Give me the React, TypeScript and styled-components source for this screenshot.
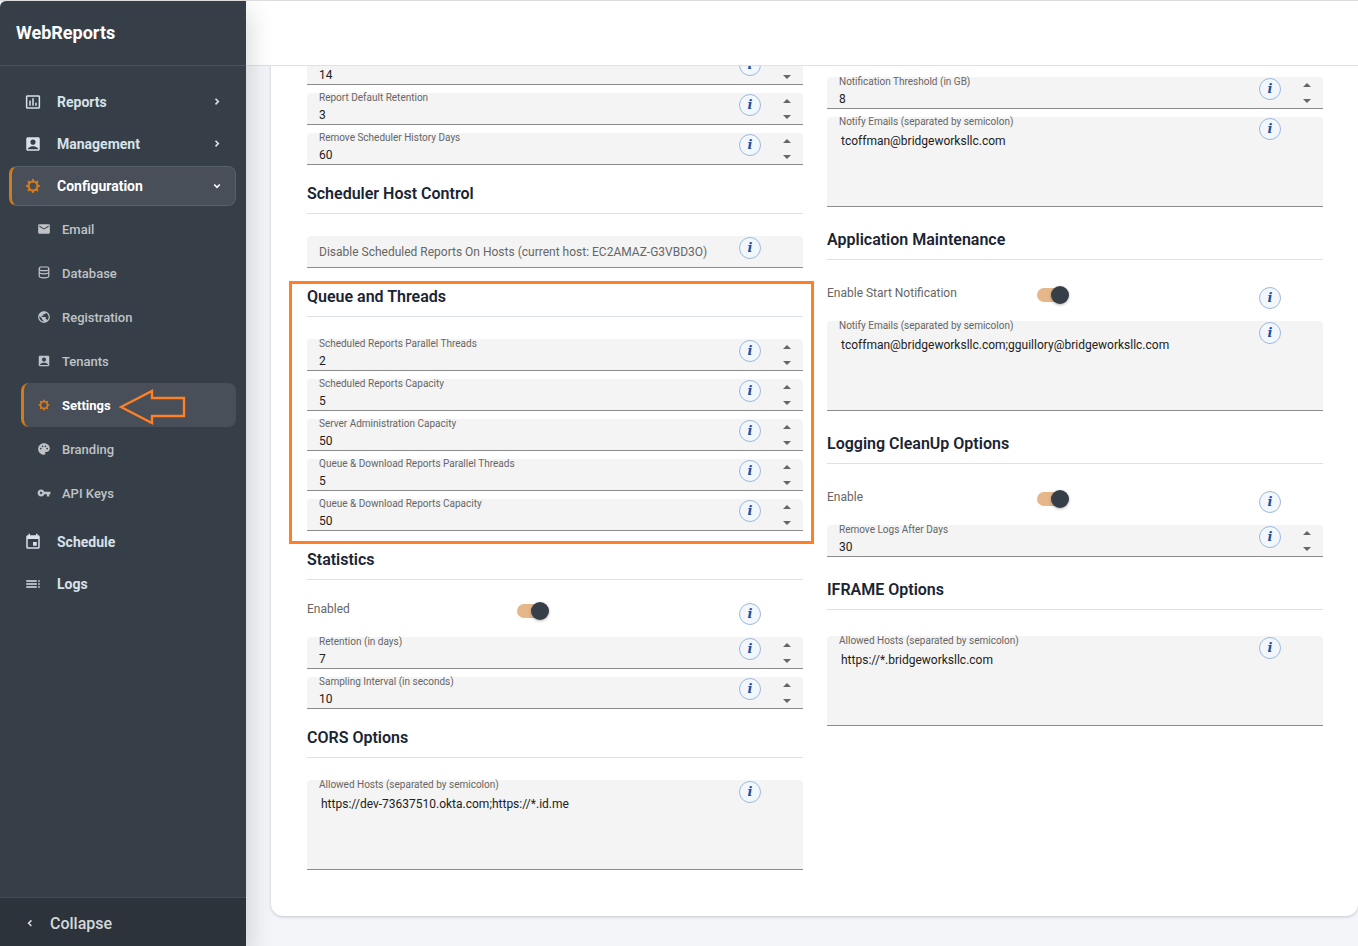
import React, { useId } from "react";
import styled, { createGlobalStyle, css } from "styled-components";
import {
  MdAccountBox,
  MdEmail,
  MdEvent,
  MdInsertChartOutlined,
  MdPalette,
  MdPublic,
  MdToc,
  MdVpnKey,
} from "react-icons/md";

const GlobalStyle = createGlobalStyle`
  *, *::before, *::after { box-sizing: border-box; }
  body {
    margin: 0;
    background: #f4f5f8;
    font-family: Roboto, "Liberation Sans", sans-serif;
    font-size: 12px;
    color: #212121;
  }
  button, input, textarea { font: inherit; color: inherit; }
`;

/* ---------- shell ---------- */

const Shell = styled.div`
  display: flex;
  height: 100vh;
  border-top: 1px solid #dcdcdc;
  overflow: hidden;
`;

const Sidebar = styled.aside`
  flex: 0 0 246px;
  display: flex;
  flex-direction: column;
  background: #363f48;
  border-top-left-radius: 6px;
  box-shadow: 4px 10px 24px rgba(54, 63, 72, 0.2);
  z-index: 1;
`;

const Brand = styled.div`
  height: 65px;
  padding: 0 16px;
  border-bottom: 1px solid #4b545e;
  font-size: 18px;
  font-weight: 700;
  line-height: 64px;
  color: #ffffff;
`;

const Nav = styled.nav`
  flex: 1;
  display: flex;
  flex-direction: column;
  gap: 2px;
  padding: 16px 10px 0 9px;
`;

const NavItem = styled.a<{ $active?: boolean }>`
  display: flex;
  align-items: center;
  height: 40px;
  padding: 0 12px;
  border: 1px solid transparent;
  border-left: 3px solid transparent;
  border-radius: 8px;
  color: #d8e1ea;
  font-size: 14px;
  font-weight: 700;
  text-decoration: none;
  ${(p) =>
    p.$active &&
    css`
      background: #484f58;
      border-color: #56606a;
      border-left-color: #d27a1e;
      color: #ffffff;
    `}
`;

const NavIcon = styled.span<{ $accent?: boolean }>`
  display: flex;
  width: 18px;
  margin-right: 15px;
  color: ${(p) => (p.$accent ? "#d27a1e" : "inherit")};
`;

const NavLabel = styled.span`
  flex: 1;
`;

const SubNav = styled.div`
  display: flex;
  flex-direction: column;
  margin-top: -1px;
  padding: 0 0 5px 12px;
`;

const SubItem = styled.a<{ $active?: boolean }>`
  position: relative;
  display: flex;
  align-items: center;
  height: 44px;
  padding-left: 13px;
  border-left: 3px solid transparent;
  border-radius: 8px;
  color: #bfc3c7;
  font-size: 13px;
  font-weight: 500;
  text-decoration: none;
  ${(p) =>
    p.$active &&
    css`
      background: #484f58;
      border-left-color: #d27a1e;
      color: #ffffff;
      font-weight: 700;
    `}
`;

const SubIcon = styled.span<{ $accent?: boolean }>`
  display: flex;
  width: 14px;
  margin-right: 11px;
  color: ${(p) => (p.$accent ? "#d27a1e" : "inherit")};
`;

const ArrowMark = styled.svg`
  position: absolute;
  left: 95px;
  top: 5px;
  width: 68px;
  height: 38px;
`;

const Collapse = styled.button`
  display: flex;
  align-items: center;
  gap: 14px;
  height: 49px;
  padding: 2px 24px 0;
  border: 0;
  border-top: 1px solid #434b54;
  background: #2d333b;
  color: #d5d8db;
  font-size: 16px;
  font-weight: 500;
`;

const Main = styled.main`
  flex: 1;
  min-width: 0;
  display: flex;
  flex-direction: column;
`;

const TopBar = styled.header`
  flex: 0 0 65px;
  background: #ffffff;
  border-bottom: 1px solid #dde1ea;
`;

/* The settings page is shown scrolled to its end. */
const Scroller = styled.div`
  flex: 1;
  min-height: 0;
  display: flex;
  flex-direction: column;
  justify-content: flex-end;
  overflow: hidden;
  padding: 0 0 30px 25px;
`;

const Card = styled.form`
  position: relative;
  z-index: 2;
  flex: none;
  display: grid;
  grid-template-columns: 1fr 1fr;
  column-gap: 24px;
  padding: 0 35px 46px 36px;
  background: #ffffff;
  border-radius: 12px;
  box-shadow: 0 1px 3px rgba(90, 110, 140, 0.35);
`;

const Column = styled.div<{ $roomy?: boolean }>`
  --heading: ${(p) => (p.$roomy ? "52px" : "48px")};
  --after: ${(p) => (p.$roomy ? "26px" : "22px")};
  padding-top: ${(p) => (p.$roomy ? "24px" : "0")};
  min-width: 0;
`;

/* ---------- sections and fields ---------- */

const Section = styled.section<{ $marked?: boolean }>`
  position: relative;
  ${(p) =>
    p.$marked &&
    css`
      &::after {
        content: "";
        position: absolute;
        inset: 13px -11px -13px -18px;
        border: 3px solid #ff7f27;
        pointer-events: none;
      }
    `}
`;

const Heading = styled.h2`
  display: flex;
  align-items: flex-end;
  height: calc(var(--heading) + 1px);
  margin: 0 0 var(--after);
  padding-bottom: 9px;
  border-bottom: 1px solid #dde1ea;
  font-size: 16px;
  font-weight: 600;
  line-height: 20px;
  color: #1a2433;
`;

const Fields = styled.div`
  display: flex;
  flex-direction: column;
  gap: 8px;
`;

const FieldBox = styled.div<{ $tall?: boolean }>`
  display: flex;
  align-items: flex-start;
  height: ${(p) => (p.$tall ? "90px" : "32px")};
  padding-left: 12px;
  background: #f4f4f4;
  border-bottom: 1px solid #8c8c8c;
  border-radius: 4px 4px 0 0;
`;

const FieldBody = styled.div`
  flex: 1;
  min-width: 0;
  display: flex;
  flex-direction: column;
`;

const FieldLabel = styled.label`
  min-height: 10px;
  font-size: 10px;
  line-height: 10px;
  color: #666666;
`;

const FieldInput = styled.input<{ $bare?: boolean }>`
  width: 100%;
  height: ${(p) => (p.$bare ? "31px" : "20px")};
  margin-top: ${(p) => (p.$bare ? "0" : "2px")};
  padding: 0;
  border: 0;
  outline: 0;
  background: transparent;
  appearance: textfield;
  &::-webkit-inner-spin-button { appearance: none; }
  &::placeholder { color: #666666; opacity: 1; }
`;

const FieldText = styled.textarea`
  width: 100%;
  height: 76px;
  margin-top: 2px;
  padding: 4px 2px;
  border: 0;
  outline: 0;
  resize: none;
  background: transparent;
  line-height: 16px;
`;

const InfoButton = styled.button`
  flex: none;
  width: 22px;
  height: 22px;
  margin: 1px 0 0;
  padding: 0;
  border: 1px solid #9db9dc;
  border-radius: 50%;
  background: #f2f7fd;
  color: #1f5199;
  font: italic 700 13px/18px "DejaVu Serif", "Liberation Serif", serif;
`;

const Steppers = styled.div`
  flex: 0 0 42px;
  display: flex;
  flex-direction: column;
  align-items: center;
  padding-left: 10px;
`;

const Step = styled.button`
  display: flex;
  align-items: center;
  justify-content: center;
  width: 16px;
  height: 16px;
  padding: 0;
  border: 0;
  background: transparent;
  color: #666666;
`;

const ToggleRow = styled.div`
  display: flex;
  align-items: flex-start;
  height: 35px;
`;

const ToggleLabel = styled.label`
  flex: 0 0 210px;
  line-height: 14px;
  color: #666666;
`;

const Toggle = styled.input`
  appearance: none;
  position: relative;
  width: 30px;
  height: 14px;
  margin: 2px auto 0 0;
  border-radius: 7px;
  background: #e5b78b;
  &::before {
    content: "";
    position: absolute;
    top: -2px;
    right: -2px;
    width: 18px;
    height: 18px;
    border-radius: 50%;
    background: #363f48;
    box-shadow: 0 1px 3px rgba(0, 0, 0, 0.3);
  }
`;

/* ---------- drawings ---------- */

const Chevron = ({ d }: { d: string }) => (
  <svg width="12" height="12" viewBox="0 0 12 12" fill="none" stroke="currentColor" strokeWidth="1.6">
    <path d={d} />
  </svg>
);

const RIGHT = "M4.5 2.8 L7.3 5.6 L4.5 8.4";
const DOWN = "M3.2 4.5 L6 7.3 L8.8 4.5";
const LEFT = "M7.4 3.4 L4.6 6.2 L7.4 9";

const Gear = ({ size }: { size: number }) => (
  <svg width={size} height={size} viewBox="0 0 18 18" fill="none" stroke="currentColor">
    <circle cx="9" cy="9" r="4.5" strokeWidth="2.2" />
    {[0, 45, 90, 135, 180, 225, 270, 315].map((a) => (
      <path key={a} d="M9 4.5 V2.9" strokeWidth="2.2" strokeLinecap="round" transform={`rotate(${a} 9 9)`} />
    ))}
  </svg>
);

const Database = () => (
  <svg width="14" height="14" viewBox="0 0 14 14" fill="none" stroke="currentColor" strokeWidth="1.2">
    <rect x="2.2" y="1" width="9.6" height="3.6" rx="1.8" />
    <path d="M2.2 3 V10 C2.2 12.4 11.8 12.4 11.8 10 V3 M2.2 6 C2.2 8.4 11.8 8.4 11.8 6" />
  </svg>
);

/* ---------- composed parts ---------- */

const Info = ({ about }: { about: string }) => (
  <InfoButton type="button" aria-label={`About ${about}`}>
    i
  </InfoButton>
);

type NumberFieldProps = { label?: string; value: number };

const NumberField = ({ label, value }: NumberFieldProps) => {
  const id = useId();
  const name = label ?? "value";
  return (
    <FieldBox>
      <FieldBody>
        <FieldLabel htmlFor={id}>{label}</FieldLabel>
        <FieldInput id={id} type="number" defaultValue={value} />
      </FieldBody>
      <Info about={name} />
      <Steppers>
        <Step type="button" aria-label={`Increase ${name}`}>
          <svg width="8" height="4" viewBox="0 0 8 4"><path d="M0 4 L4 0 L8 4 Z" fill="currentColor" /></svg>
        </Step>
        <Step type="button" aria-label={`Decrease ${name}`}>
          <svg width="8" height="4" viewBox="0 0 8 4"><path d="M0 0 L4 4 L8 0 Z" fill="currentColor" /></svg>
        </Step>
      </Steppers>
    </FieldBox>
  );
};

const InfoSlot = styled.div`
  flex: 0 0 64px;
  display: flex;
`;

const TextField = ({ label, value }: { label: string; value: string }) => {
  const id = useId();
  return (
    <FieldBox $tall>
      <FieldBody>
        <FieldLabel htmlFor={id}>{label}</FieldLabel>
        <FieldText id={id} defaultValue={value} spellCheck={false} />
      </FieldBody>
      <InfoSlot>
        <Info about={label} />
      </InfoSlot>
    </FieldBox>
  );
};

const HostField = ({ label }: { label: string }) => (
  <FieldBox>
    <FieldBody>
      <FieldInput $bare type="text" placeholder={label} aria-label={label} />
    </FieldBody>
    <InfoSlot>
      <Info about={label} />
    </InfoSlot>
  </FieldBox>
);

const SwitchField = ({ label }: { label: string }) => {
  const id = useId();
  return (
    <ToggleRow>
      <ToggleLabel htmlFor={id}>{label}</ToggleLabel>
      <Toggle id={id} type="checkbox" role="switch" defaultChecked />
      <InfoSlot>
        <Info about={label} />
      </InfoSlot>
    </ToggleRow>
  );
};

export default function App() {
  return (
    <>
      <GlobalStyle />
      <Shell>
        <Sidebar>
          <Brand>WebReports</Brand>
          <Nav>
            <NavItem href="#reports">
              <NavIcon><MdInsertChartOutlined size={18} /></NavIcon>
              <NavLabel>Reports</NavLabel>
              <Chevron d={RIGHT} />
            </NavItem>
            <NavItem href="#management">
              <NavIcon><MdAccountBox size={18} /></NavIcon>
              <NavLabel>Management</NavLabel>
              <Chevron d={RIGHT} />
            </NavItem>
            <NavItem href="#configuration" $active>
              <NavIcon $accent><Gear size={18} /></NavIcon>
              <NavLabel>Configuration</NavLabel>
              <Chevron d={DOWN} />
            </NavItem>
            <SubNav>
              <SubItem href="#email"><SubIcon><MdEmail size={14} /></SubIcon>Email</SubItem>
              <SubItem href="#database"><SubIcon><Database /></SubIcon>Database</SubItem>
              <SubItem href="#registration"><SubIcon><MdPublic size={14} /></SubIcon>Registration</SubItem>
              <SubItem href="#tenants"><SubIcon><MdAccountBox size={14} /></SubIcon>Tenants</SubItem>
              <SubItem href="#settings" $active>
                <SubIcon $accent><Gear size={14} /></SubIcon>Settings
                <ArrowMark viewBox="0 0 68 38" fill="none" stroke="#ff7f27" strokeWidth="2.4">
                  <path d="M2 19 L33 3 V10 H65 V28 H33 V35 Z" />
                </ArrowMark>
              </SubItem>
              <SubItem href="#branding"><SubIcon><MdPalette size={14} /></SubIcon>Branding</SubItem>
              <SubItem href="#api-keys"><SubIcon><MdVpnKey size={14} /></SubIcon>API Keys</SubItem>
            </SubNav>
            <NavItem href="#schedule">
              <NavIcon><MdEvent size={18} /></NavIcon>
              <NavLabel>Schedule</NavLabel>
            </NavItem>
            <NavItem href="#logs">
              <NavIcon><MdToc size={18} /></NavIcon>
              <NavLabel>Logs</NavLabel>
            </NavItem>
          </Nav>
          <Collapse type="button">
            <Chevron d={LEFT} />
            Collapse
          </Collapse>
        </Sidebar>
        <Main>
          <TopBar />
          <Scroller>
            <Card>
              <Column>
                <Fields>
                  <NumberField value={14} />
                  <NumberField label="Report Default Retention" value={3} />
                  <NumberField label="Remove Scheduler History Days" value={60} />
                </Fields>
                <Section>
                  <Heading>Scheduler Host Control</Heading>
                  <HostField label="Disable Scheduled Reports On Hosts (current host: EC2AMAZ-G3VBD3O)" />
                </Section>
                <Section $marked>
                  <Heading>Queue and Threads</Heading>
                  <Fields>
                    <NumberField label="Scheduled Reports Parallel Threads" value={2} />
                    <NumberField label="Scheduled Reports Capacity" value={5} />
                    <NumberField label="Server Administration Capacity" value={50} />
                    <NumberField label="Queue & Download Reports Parallel Threads" value={5} />
                    <NumberField label="Queue & Download Reports Capacity" value={50} />
                  </Fields>
                </Section>
                <Section>
                  <Heading>Statistics</Heading>
                  <SwitchField label="Enabled" />
                  <Fields>
                    <NumberField label="Retention (in days)" value={7} />
                    <NumberField label="Sampling Interval (in seconds)" value={10} />
                  </Fields>
                </Section>
                <Section>
                  <Heading>CORS Options</Heading>
                  <TextField
                    label="Allowed Hosts (separated by semicolon)"
                    value="https://dev-73637510.okta.com;https://*.id.me"
                  />
                </Section>
              </Column>
              <Column $roomy>
                <Fields>
                  <NumberField label="Notification Threshold (in GB)" value={8} />
                  <TextField label="Notify Emails (separated by semicolon)" value="tcoffman@bridgeworksllc.com" />
                </Fields>
                <Section>
                  <Heading>Application Maintenance</Heading>
                  <SwitchField label="Enable Start Notification" />
                  <TextField
                    label="Notify Emails (separated by semicolon)"
                    value="tcoffman@bridgeworksllc.com;gguillory@bridgeworksllc.com"
                  />
                </Section>
                <Section>
                  <Heading>Logging CleanUp Options</Heading>
                  <SwitchField label="Enable" />
                  <NumberField label="Remove Logs After Days" value={30} />
                </Section>
                <Section>
                  <Heading>IFRAME Options</Heading>
                  <TextField label="Allowed Hosts (separated by semicolon)" value="https://*.bridgeworksllc.com" />
                </Section>
              </Column>
            </Card>
          </Scroller>
        </Main>
      </Shell>
    </>
  );
}
